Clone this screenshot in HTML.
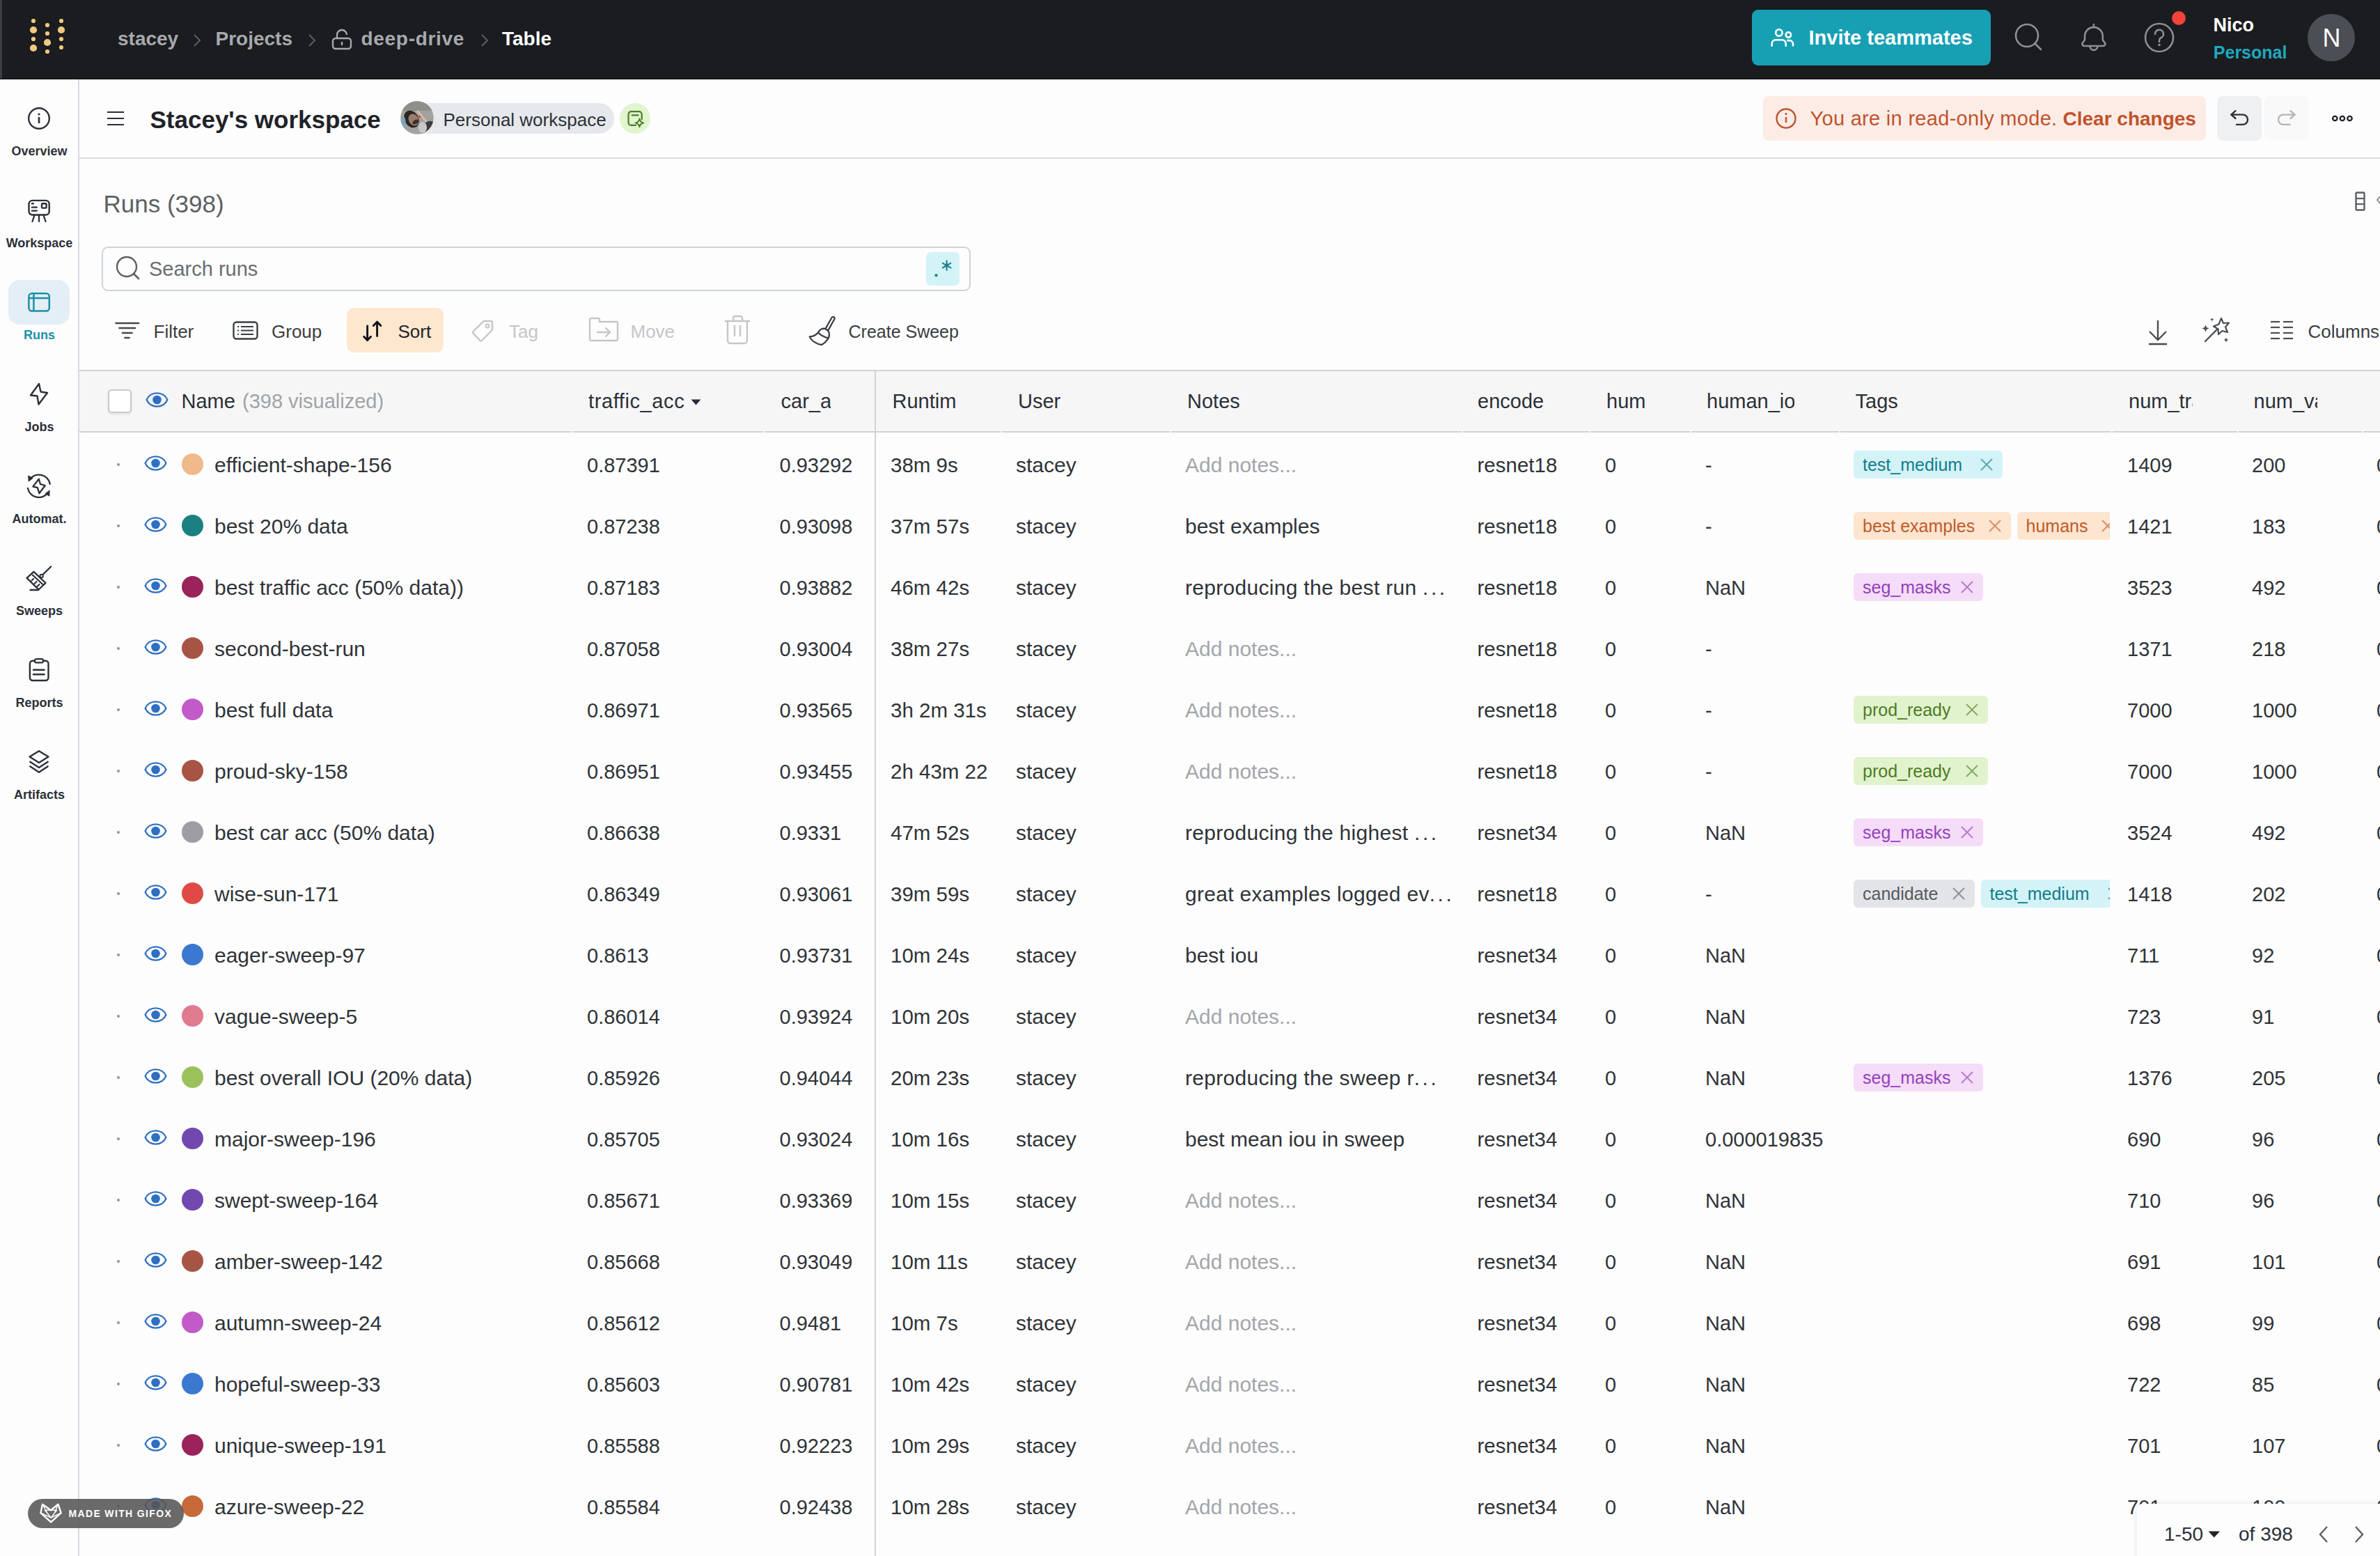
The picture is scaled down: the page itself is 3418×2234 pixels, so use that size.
<!DOCTYPE html>
<html><head><meta charset="utf-8"><title>Runs</title>
<style>
html,body{margin:0;padding:0;}
body{width:3418px;height:2234px;overflow:hidden;position:relative;background:#fdfdfd;font-family:"Liberation Sans",sans-serif;}
.a{position:absolute;white-space:nowrap;}
svg.a{overflow:visible;}
</style></head><body>

<div class="a" style="left:0px;top:0px;width:3418px;height:114px;background:#1a1c1f;"></div>
<div class="a" style="left:0px;top:113px;width:3418px;height:1px;background:#08090b;"></div>
<div class="a" style="left:0px;top:0px;width:3px;height:113px;background:#3a3d42;"></div>
<svg class="a" style="left:0px;top:0px;" width="120" height="113" viewBox="0 0 120 113" fill="none"><circle cx="48" cy="30" r="3.1" fill="#efc97f"/><circle cx="48" cy="43" r="5.1" fill="#efc97f"/><circle cx="48" cy="56" r="3.1" fill="#efc97f"/><circle cx="48" cy="69" r="5.1" fill="#efc97f"/><circle cx="68" cy="36" r="3.1" fill="#efc97f"/><circle cx="68" cy="48" r="3.1" fill="#efc97f"/><circle cx="68" cy="61" r="5.1" fill="#efc97f"/><circle cx="68" cy="74" r="3.1" fill="#efc97f"/><circle cx="88" cy="30" r="3.1" fill="#efc97f"/><circle cx="88" cy="43" r="5.1" fill="#efc97f"/><circle cx="88" cy="56" r="3.1" fill="#efc97f"/><circle cx="88" cy="68" r="3.1" fill="#efc97f"/></svg>
<div class="a" style="left:169px;top:42.30px;font-size:28px;line-height:28px;color:#a7a9ad;font-weight:700;">stacey</div>
<svg class="a" style="left:277px;top:48px;" width="12" height="20" viewBox="0 0 12 20" fill="none"><polyline points="2,2 10,10 2,18" stroke="#5c5f64" stroke-width="2" fill="none"/></svg>
<div class="a" style="left:309.5px;top:42.30px;font-size:28px;line-height:28px;color:#a7a9ad;font-weight:700;">Projects</div>
<svg class="a" style="left:442px;top:48px;" width="12" height="20" viewBox="0 0 12 20" fill="none"><polyline points="2,2 10,10 2,18" stroke="#5c5f64" stroke-width="2" fill="none"/></svg>
<svg class="a" style="left:476px;top:40px;" width="30" height="32" viewBox="0 0 30 32" fill="none"><rect x="2" y="15" width="26" height="15" rx="4" stroke="#a7a9ad" stroke-width="2.4"/><path d="M8 15 V10 a7 7 0 0 1 14 0" stroke="#a7a9ad" stroke-width="2.4"/><line x1="15" y1="20" x2="15" y2="25" stroke="#a7a9ad" stroke-width="2.4"/></svg>
<div class="a" style="left:518.5px;top:42.30px;font-size:28px;line-height:28px;color:#a7a9ad;font-weight:700;letter-spacing:0.7px;">deep-drive</div>
<svg class="a" style="left:690px;top:48px;" width="12" height="20" viewBox="0 0 12 20" fill="none"><polyline points="2,2 10,10 2,18" stroke="#5c5f64" stroke-width="2" fill="none"/></svg>
<div class="a" style="left:721px;top:42.30px;font-size:28px;line-height:28px;color:#ffffff;font-weight:700;">Table</div>
<div class="a" style="left:2516px;top:14px;width:343px;height:80px;background:#17a0b4;border-radius:9px;"></div>
<svg class="a" style="left:2541px;top:39px;" width="38" height="30" viewBox="0 0 38 30" fill="none"><circle cx="13.9" cy="8" r="4.7" stroke="#fff" stroke-width="2.6"/><path d="M3.6 26.7 V23.7 A5.5 5.5 0 0 1 9.1 18.2 H18.2 A5.5 5.5 0 0 1 23.7 23.7 V26.7" stroke="#fff" stroke-width="2.6" stroke-linecap="round"/><circle cx="27.4" cy="11.1" r="3.7" stroke="#fff" stroke-width="2.6"/><path d="M26.2 19.1 H29 A5 5 0 0 1 34 24.1 V26.4" stroke="#fff" stroke-width="2.6" stroke-linecap="round"/></svg>
<div class="a" style="left:2597.5px;top:40.15px;font-size:29px;line-height:29px;color:#ffffff;font-weight:700;">Invite teammates</div>
<svg class="a" style="left:2890px;top:32px;" width="44" height="44" viewBox="0 0 44 44" fill="none"><circle cx="21" cy="19" r="16" stroke="#8c8f94" stroke-width="2.6"/><line x1="32.5" y1="30.5" x2="41" y2="39" stroke="#8c8f94" stroke-width="2.6" stroke-linecap="round"/></svg>
<svg class="a" style="left:2986px;top:32px;" width="42" height="44" viewBox="0 0 42 44" fill="none"><path d="M8 25 V20 A12.9 12.9 0 0 1 33.8 20 V25 C33.8 27 37.4 28.5 37.4 31 A3 3 0 0 1 34.4 34 H7.3 A3 3 0 0 1 4.3 31 C4.3 28.5 8 27 8 25 Z" stroke="#8c8f94" stroke-width="2.6" stroke-linejoin="round"/><path d="M15.5 34.5 A5.4 5.4 0 0 0 26.3 34.5" stroke="#8c8f94" stroke-width="2.6"/><line x1="20.9" y1="3" x2="20.9" y2="6.5" stroke="#8c8f94" stroke-width="2.6" stroke-linecap="round"/></svg>
<svg class="a" style="left:3078px;top:31px;" width="46" height="46" viewBox="0 0 46 46" fill="none"><circle cx="23" cy="23" r="20" stroke="#8c8f94" stroke-width="2.6"/><path d="M17 18 a6 6 0 1 1 8 5.5 c-1.5 .8 -2 2 -2 3.5 v2" stroke="#8c8f94" stroke-width="2.6" stroke-linecap="round" fill="none"/><circle cx="23" cy="33.5" r="1.8" fill="#8c8f94"/></svg>
<div class="a" style="left:3119px;top:16px;width:20px;height:20px;background:#f0433a;border-radius:50%;"></div>
<div class="a" style="left:3178.4px;top:22.74px;font-size:27px;line-height:27px;color:#ffffff;font-weight:700;">Nico</div>
<div class="a" style="left:3178.8px;top:62.94px;font-size:25px;line-height:25px;color:#1fa8bf;font-weight:700;">Personal</div>
<div class="a" style="left:3314px;top:20px;width:68px;height:68px;background:#4b4e54;border-radius:50%;"></div>
<div class="a" style="left:3335.5px;top:36.83px;font-size:36px;line-height:36px;color:#ffffff;font-weight:400;">N</div>
<div class="a" style="left:112px;top:114px;width:2px;height:2120px;background:#d6dbe1;"></div>
<div class="a" style="left:12px;top:402px;width:88px;height:64px;background:#e4eef6;border-radius:16px;"></div>
<svg class="a" style="left:40px;top:153px;" width="34" height="34" viewBox="0 0 34 34" fill="none"><circle cx="16" cy="17" r="14.8" stroke="#2b3038" stroke-width="2.4"/><line x1="16" y1="15" x2="16" y2="24" stroke="#2b3038" stroke-width="2.6"/><circle cx="16" cy="11" r="1.6" fill="#2b3038"/></svg>
<div class="a" style="left:0;width:113px;text-align:center;top:207.56px;font-size:18px;line-height:18px;font-weight:700;color:#2b3038;">Overview</div>
<svg class="a" style="left:40px;top:285px;" width="34" height="34" viewBox="0 0 34 34" fill="none"><rect x="1.5" y="2.9" width="29.2" height="20.6" rx="5" stroke="#2b3038" stroke-width="2.4"/><line x1="6" y1="7.3" x2="7.8" y2="7.3" stroke="#2b3038" stroke-width="2.4" stroke-linecap="round"/><line x1="6" y1="12.6" x2="12.8" y2="12.6" stroke="#2b3038" stroke-width="2.4" stroke-linecap="round"/><line x1="6" y1="17.6" x2="12.8" y2="17.6" stroke="#2b3038" stroke-width="2.4" stroke-linecap="round"/><rect x="20" y="7.3" width="6.6" height="6.3" rx="1" stroke="#2b3038" stroke-width="2.4"/><path d="M9.5 24 L6.5 33 M16 24 V33 M22.5 24 L25.5 33" stroke="#2b3038" stroke-width="2.3" stroke-linecap="round"/></svg>
<div class="a" style="left:0;width:113px;text-align:center;top:339.56px;font-size:18px;line-height:18px;font-weight:700;color:#2b3038;">Workspace</div>
<svg class="a" style="left:40px;top:417px;" width="34" height="34" viewBox="0 0 34 34" fill="none"><rect x="1.4" y="4.2" width="29.4" height="25.4" rx="4.5" stroke="#1b8fa6" stroke-width="2.5"/><line x1="1.4" y1="11" x2="30.8" y2="11" stroke="#1b8fa6" stroke-width="2.5"/><line x1="8.4" y1="4.2" x2="8.4" y2="29.6" stroke="#1b8fa6" stroke-width="2.5"/></svg>
<div class="a" style="left:0;width:113px;text-align:center;top:471.56px;font-size:18px;line-height:18px;font-weight:700;color:#1b8fa6;">Runs</div>
<svg class="a" style="left:40px;top:549px;" width="34" height="34" viewBox="0 0 34 34" fill="none"><path d="M16 2 L4 18.5 L13.5 19.5 L15.5 31.5 L28 15 L18.5 13.5 Z" stroke="#2b3038" stroke-width="2.4" stroke-linejoin="round"/></svg>
<div class="a" style="left:0;width:113px;text-align:center;top:603.56px;font-size:18px;line-height:18px;font-weight:700;color:#2b3038;">Jobs</div>
<svg class="a" style="left:40px;top:681px;" width="34" height="34" viewBox="0 0 34 34" fill="none"><path d="M3.21 6.61 A16.2 16.2 0 0 1 31.70 13.71" stroke="#2b3038" stroke-width="2.4" stroke-linecap="round"/><path d="M-0.10 19.89 A16.2 16.2 0 0 0 28.74 26.55" stroke="#2b3038" stroke-width="2.4" stroke-linecap="round"/><path d="M0.8 2.2 L1.2 9.8 L6.8 5.6 Z" fill="#2b3038" stroke="#2b3038" stroke-width="1.2" stroke-linejoin="round"/><path d="M31 23.5 L30.8 31 L25.5 27.8 Z" fill="#2b3038" stroke="#2b3038" stroke-width="1.2" stroke-linejoin="round"/><path d="M15.8 6.8 L7.4 17.6 L13.9 19.2 L16.4 27.3 L24.7 16.2 L17.9 14 Z" stroke="#2b3038" stroke-width="2.3" stroke-linejoin="round"/></svg>
<div class="a" style="left:0;width:113px;text-align:center;top:735.56px;font-size:18px;line-height:18px;font-weight:700;color:#2b3038;">Automat.</div>
<svg class="a" style="left:40px;top:813px;" width="34" height="34" viewBox="0 0 34 34" fill="none"><path d="M33.2 0.5 L21.5 12" stroke="#2b3038" stroke-width="2.4" stroke-linecap="round"/><circle cx="19.6" cy="14" r="2.2" stroke="#2b3038" stroke-width="2"/><path d="M8.5 7.8 L25.5 24 L15.5 33.5 L-1.5 16.8 Z" stroke="#2b3038" stroke-width="2.4" stroke-linejoin="round"/><path d="M6.2 12 L22.8 27.3" stroke="#2b3038" stroke-width="2.2"/><path d="M5.5 20.5 L8 18 M9.5 25 L12.5 22 M13.5 29 L16.5 26" stroke="#2b3038" stroke-width="2.2" stroke-linecap="round"/><line x1="3.5" y1="34" x2="15" y2="34" stroke="#2b3038" stroke-width="2.4" stroke-linecap="round"/></svg>
<div class="a" style="left:0;width:113px;text-align:center;top:867.56px;font-size:18px;line-height:18px;font-weight:700;color:#2b3038;">Sweeps</div>
<svg class="a" style="left:40px;top:945px;" width="34" height="34" viewBox="0 0 34 34" fill="none"><rect x="2.9" y="3.8" width="26.6" height="28.2" rx="4" stroke="#2b3038" stroke-width="2.4"/><rect x="10" y="1.2" width="12" height="5.2" rx="2.2" stroke="#2b3038" stroke-width="2.2" fill="#fdfdfd"/><line x1="8" y1="16.7" x2="23.5" y2="16.7" stroke="#2b3038" stroke-width="2.4" stroke-linecap="round"/><line x1="8" y1="23.3" x2="23.5" y2="23.3" stroke="#2b3038" stroke-width="2.4" stroke-linecap="round"/></svg>
<div class="a" style="left:0;width:113px;text-align:center;top:999.56px;font-size:18px;line-height:18px;font-weight:700;color:#2b3038;">Reports</div>
<svg class="a" style="left:40px;top:1077px;" width="34" height="34" viewBox="0 0 34 34" fill="none"><path d="M16 1.2 L29.5 9.6 L16 18 L2.5 9.6 Z" stroke="#2b3038" stroke-width="2.4" stroke-linejoin="round"/><path d="M2.5 16.2 L16 25 L29.5 16.2" stroke="#2b3038" stroke-width="2.4" stroke-linejoin="round"/><path d="M2.5 22.8 L16 31.8 L29.5 22.8" stroke="#2b3038" stroke-width="2.4" stroke-linejoin="round"/></svg>
<div class="a" style="left:0;width:113px;text-align:center;top:1131.56px;font-size:18px;line-height:18px;font-weight:700;color:#2b3038;">Artifacts</div>
<div class="a" style="left:154px;top:160px;width:24px;height:2.4px;background:#2b3038;"></div>
<div class="a" style="left:154px;top:169px;width:24px;height:2.4px;background:#2b3038;"></div>
<div class="a" style="left:154px;top:178px;width:24px;height:2.4px;background:#2b3038;"></div>
<div class="a" style="left:215.5px;top:154.37px;font-size:35px;line-height:35px;color:#1f2329;font-weight:700;">Stacey&#x27;s workspace</div>
<div class="a" style="left:575px;top:148px;width:307px;height:44px;background:#e6e8eb;border-radius:22px;"></div>
<svg class="a" style="left:575px;top:145px;filter:blur(0.6px);" width="48" height="48" viewBox="0 0 48 48" fill="none"><defs><clipPath id="avc"><circle cx="24" cy="24" r="23.7"/></clipPath></defs><g clip-path="url(#avc)"><rect width="48" height="48" fill="#a3a29f"/><rect x="0" y="0" width="48" height="14" fill="#8f8e8a"/><ellipse cx="16" cy="26" rx="10" ry="13" fill="#2a2624" transform="rotate(-30 16 26)"/><ellipse cx="19" cy="27" rx="7" ry="9" fill="#9b7d6e" transform="rotate(-30 19 27)"/><ellipse cx="22" cy="30" rx="5" ry="3" fill="#3b2f2c" transform="rotate(-30 22 30)"/><ellipse cx="29" cy="22" rx="3" ry="2" fill="#c24a2a"/><path d="M24 14 L46 40" stroke="#d9b8a8" stroke-width="3"/><ellipse cx="40" cy="40" rx="9" ry="12" fill="#3c3d40" transform="rotate(30 40 40)"/><ellipse cx="32" cy="38" rx="6" ry="8" fill="#c9c8c6"/><ellipse cx="4" cy="34" rx="4" ry="12" fill="#7fa6b8"/></g></svg>
<div class="a" style="left:636.5px;top:158.79px;font-size:26px;line-height:26px;color:#2b3038;font-weight:400;">Personal workspace</div>
<div class="a" style="left:890px;top:148px;width:44px;height:44px;background:#e1f5cf;border-radius:50%;"></div>
<svg class="a" style="left:899px;top:157px;" width="28" height="28" viewBox="0 0 28 28" fill="none"><path d="M22.7 14.5 V7.2 a4 4 0 0 0 -4 -4 H7.5 a4 4 0 0 0 -4 4 V18.8 a4 4 0 0 0 4 4 H14" stroke="#4f7a2b" stroke-width="2.2" stroke-linecap="round"/><line x1="8.6" y1="8.3" x2="17.6" y2="8.3" stroke="#4f7a2b" stroke-width="2.2" stroke-linecap="round"/><path d="M19.4 13.6 Q20.3 18.5 25.2 19.4 Q20.3 20.3 19.4 25.2 Q18.5 20.3 13.6 19.4 Q18.5 18.5 19.4 13.6 Z" stroke="#4f7a2b" stroke-width="2" stroke-linejoin="round"/></svg>
<div class="a" style="left:2532px;top:138px;width:636px;height:64px;background:#fdece6;border-radius:8px;"></div>
<svg class="a" style="left:2549px;top:154px;" width="32" height="32" viewBox="0 0 32 32" fill="none"><circle cx="16" cy="16" r="13.5" stroke="#c0532b" stroke-width="2.4"/><line x1="16" y1="14" x2="16" y2="22" stroke="#c0532b" stroke-width="2.4"/><circle cx="16" cy="9.5" r="1.6" fill="#c0532b"/></svg>
<div class="a" style="left:2599.5px;top:155.85px;font-size:29px;line-height:29px;color:#c0532b;font-weight:400;letter-spacing:0.3px;">You are in read-only mode.</div>
<div class="a" style="left:2962.5px;top:156.70px;font-size:28px;line-height:28px;color:#c0532b;font-weight:700;">Clear changes</div>
<div class="a" style="left:3184px;top:138px;width:64px;height:64px;background:#eff0f1;border-radius:8px;"></div>
<div class="a" style="left:3252px;top:138px;width:64px;height:64px;background:#f9f9fa;border-radius:8px;"></div>
<svg class="a" style="left:3202px;top:157px;" width="30" height="26" viewBox="0 0 30 26" fill="none"><path d="M2.4 7.6 H18.85 A7.15 7.15 0 0 1 18.85 21.9 H10" stroke="#2b3038" stroke-width="2.4" fill="none" stroke-linecap="round"/><path d="M8.5 2.2 L2.4 7.6 L8.5 13" stroke="#2b3038" stroke-width="2.4" fill="none" stroke-linecap="round" stroke-linejoin="round"/></svg>
<svg class="a" style="left:3270px;top:157px;" width="30" height="26" viewBox="0 0 30 26" fill="none"><path d="M25.6 7.6 H9.15 A7.15 7.15 0 0 0 9.15 21.9 H18.6" stroke="#b3b5b9" stroke-width="2.4" fill="none" stroke-linecap="round"/><path d="M19.5 2.2 L25.6 7.6 L19.5 13" stroke="#b3b5b9" stroke-width="2.4" fill="none" stroke-linecap="round" stroke-linejoin="round"/></svg>
<svg class="a" style="left:3349px;top:164px;" width="32" height="12" viewBox="0 0 32 12" fill="none"><circle cx="4.3" cy="6" r="3.2" stroke="#1f2329" stroke-width="2.3"/><circle cx="14.9" cy="6" r="3.2" stroke="#1f2329" stroke-width="2.3"/><circle cx="25.5" cy="6" r="3.2" stroke="#1f2329" stroke-width="2.3"/></svg>
<div class="a" style="left:114px;top:226px;width:3304px;height:2px;background:#d9dde2;"></div>
<div class="a" style="left:148.5px;top:274.77px;font-size:35px;line-height:35px;color:#5d6064;font-weight:400;">Runs (398)</div>
<svg class="a" style="left:3382px;top:275px;" width="16" height="28" viewBox="0 0 16 28" fill="none"><rect x="1.5" y="1.5" width="12" height="25" rx="1" stroke="#5d6064" stroke-width="2.4"/><line x1="1.5" y1="10" x2="13.5" y2="10" stroke="#5d6064" stroke-width="2.2"/><line x1="1.5" y1="18" x2="13.5" y2="18" stroke="#5d6064" stroke-width="2.2"/></svg>
<svg class="a" style="left:3412px;top:280px;" width="8" height="14" viewBox="0 0 8 14" fill="none"><path d="M6 2 L2 7 L6 12" stroke="#8a8d91" stroke-width="2" fill="none"/></svg>
<div class="a" style="left:146px;top:354px;width:1248px;height:64px;box-sizing:border-box;border:2px solid #cfd3d9;border-radius:9px;background:#fdfdfd;"></div>
<svg class="a" style="left:166px;top:367px;" width="36" height="36" viewBox="0 0 36 36" fill="none"><circle cx="16" cy="16" r="14" stroke="#5d6064" stroke-width="2.4"/><line x1="26" y1="26" x2="33" y2="33" stroke="#5d6064" stroke-width="2.6" stroke-linecap="round"/></svg>
<div class="a" style="left:214px;top:372.45px;font-size:29px;line-height:29px;color:#6a6d72;font-weight:400;">Search runs</div>
<div class="a" style="left:1330px;top:362px;width:48px;height:48px;background:#d3f3f7;border-radius:7px;"></div>
<svg class="a" style="left:1330px;top:362px;" width="48" height="48" viewBox="0 0 48 48" fill="none"><circle cx="14.5" cy="33.3" r="2.1" fill="#167c88"/><line x1="29.60" y1="25.70" x2="29.60" y2="12.50" stroke="#167c88" stroke-width="2.1" stroke-linecap="round"/><line x1="23.88" y1="22.40" x2="35.32" y2="15.80" stroke="#167c88" stroke-width="2.1" stroke-linecap="round"/><line x1="23.88" y1="15.80" x2="35.32" y2="22.40" stroke="#167c88" stroke-width="2.1" stroke-linecap="round"/></svg>
<svg class="a" style="left:164px;top:461px;" width="38" height="28" viewBox="0 0 38 28" fill="none"><line x1="2.5" y1="3" x2="35" y2="3" stroke="#46494e" stroke-width="2.6" stroke-linecap="round"/><line x1="7.5" y1="10" x2="30" y2="10" stroke="#46494e" stroke-width="2.6" stroke-linecap="round"/><line x1="12" y1="17" x2="25.5" y2="17" stroke="#46494e" stroke-width="2.6" stroke-linecap="round"/><line x1="15.5" y1="24" x2="21.5" y2="24" stroke="#46494e" stroke-width="2.6" stroke-linecap="round"/></svg>
<div class="a" style="left:220.5px;top:463.29px;font-size:26px;line-height:26px;color:#3a3d42;font-weight:400;">Filter</div>
<svg class="a" style="left:334px;top:461px;" width="38" height="28" viewBox="0 0 38 28" fill="none"><rect x="1.5" y="1.5" width="34" height="24" rx="4" stroke="#3a3d42" stroke-width="2.4"/><line x1="7" y1="8" x2="9" y2="8" stroke="#3a3d42" stroke-width="2"/><line x1="12" y1="8" x2="30" y2="8" stroke="#3a3d42" stroke-width="2"/><line x1="7" y1="13.5" x2="9" y2="13.5" stroke="#3a3d42" stroke-width="2"/><line x1="12" y1="13.5" x2="30" y2="13.5" stroke="#3a3d42" stroke-width="2"/><line x1="7" y1="19" x2="9" y2="19" stroke="#3a3d42" stroke-width="2"/><line x1="12" y1="19" x2="30" y2="19" stroke="#3a3d42" stroke-width="2"/></svg>
<div class="a" style="left:390px;top:463.29px;font-size:26px;line-height:26px;color:#3a3d42;font-weight:400;">Group</div>
<div class="a" style="left:498px;top:442px;width:139px;height:64px;background:#fee7cf;border-radius:10px;"></div>
<svg class="a" style="left:519px;top:460px;" width="32" height="32" viewBox="0 0 32 32" fill="none"><path d="M8.6 8 V28 M3.6 23.2 L8.6 28.6 L13.6 23.2" stroke="#111315" stroke-width="2.9" fill="none" stroke-linecap="round" stroke-linejoin="round"/><path d="M22.6 22.5 V2.5 M17.4 7.6 L22.6 2 L27.8 7.6" stroke="#111315" stroke-width="2.9" fill="none" stroke-linecap="round" stroke-linejoin="round"/></svg>
<div class="a" style="left:571.5px;top:463.29px;font-size:26px;line-height:26px;color:#1f2329;font-weight:400;">Sort</div>
<svg class="a" style="left:676px;top:457px;" width="36" height="36" viewBox="0 0 36 36" fill="none"><path d="M4 18.5 L17.5 5 a3 3 0 0 1 2 -1 H29 a2 2 0 0 1 2 2 V15.5 a3 3 0 0 1 -1 2 L16.5 31.5 a2.5 2.5 0 0 1 -3.5 0 L4 22 a2.5 2.5 0 0 1 0 -3.5 Z" stroke="#c4c6c9" stroke-width="2.4" stroke-linejoin="round"/><circle cx="24" cy="11" r="2.5" stroke="#c4c6c9" stroke-width="2"/></svg>
<div class="a" style="left:731px;top:463.29px;font-size:26px;line-height:26px;color:#c4c6c9;font-weight:400;">Tag</div>
<svg class="a" style="left:845px;top:455px;" width="46" height="38" viewBox="0 0 46 38" fill="none"><path d="M4 2 H14 a2 2 0 0 1 2 2 V7 H40 a2 2 0 0 1 2 2 V32 a2 2 0 0 1 -2 2 H4 a2 2 0 0 1 -2 -2 V4 a2 2 0 0 1 2 -2 Z" stroke="#c4c6c9" stroke-width="2.4" stroke-linejoin="round"/><path d="M13 22 H31 M25 16 L31 22 L25 28" stroke="#c4c6c9" stroke-width="2.4" stroke-linecap="round" stroke-linejoin="round"/></svg>
<div class="a" style="left:905.5px;top:463.29px;font-size:26px;line-height:26px;color:#c4c6c9;font-weight:400;">Move</div>
<svg class="a" style="left:1039px;top:452px;" width="42" height="44" viewBox="0 0 42 44" fill="none"><path d="M2 9 H38 M14 9 V5 a3 3 0 0 1 3 -3 H24 a3 3 0 0 1 3 3 V9" stroke="#c4c6c9" stroke-width="2.4"/><path d="M6 9 V37 a4 4 0 0 0 4 4 H30 a4 4 0 0 0 4 -4 V9" stroke="#c4c6c9" stroke-width="2.4"/><line x1="16" y1="15" x2="16" y2="31" stroke="#c4c6c9" stroke-width="2.4"/><line x1="24" y1="15" x2="24" y2="31" stroke="#c4c6c9" stroke-width="2.4"/></svg>
<svg class="a" style="left:1160px;top:453px;" width="42" height="46" viewBox="0 0 42 46" fill="none"><path d="M25.6 18.9 L34.5 3.0 A2.2 2.2 0 0 1 38.3 5.2 L29.4 21.1" stroke="#3a3d42" stroke-width="2.2" stroke-linejoin="round"/><path d="M14.9 24.6 C17 20 22 17.5 26 19.5 C30.5 21.5 32.5 27 29.7 32.7" stroke="#3a3d42" stroke-width="2.3"/><path d="M14.9 24.6 C18 28 24 31 29.7 32.7" stroke="#3a3d42" stroke-width="2.3"/><path d="M14.9 24.6 C12 28 7 30.5 2.7 30.4 C5 36 12 41 20 42 C24 40 27.5 36 29.7 32.7" stroke="#3a3d42" stroke-width="2.3" stroke-linejoin="round"/></svg>
<div class="a" style="left:1218.5px;top:464.14px;font-size:25px;line-height:25px;color:#3a3d42;font-weight:400;">Create Sweep</div>
<svg class="a" style="left:3084px;top:458px;" width="32" height="40" viewBox="0 0 32 40" fill="none"><line x1="15" y1="2" x2="15" y2="28" stroke="#4a4d52" stroke-width="2.4"/><path d="M3 18 L15 30 L27 18" stroke="#4a4d52" stroke-width="2.4" fill="none"/><line x1="2" y1="36" x2="28" y2="36" stroke="#4a4d52" stroke-width="2.6"/></svg>
<svg class="a" style="left:3163px;top:454px;" width="42" height="40" viewBox="0 0 42 40" fill="none"><path d="M4 36 L22 18" stroke="#4a4d52" stroke-width="2.4" stroke-linecap="round"/><path d="M27 3 L30 10 L38 9.5 L33 15.5 L36 23 L28.5 21 L23 26 L22.5 18.5 L16 14.5 L23.5 11.5 Z" stroke="#4a4d52" stroke-width="2.2" stroke-linejoin="round"/><path d="M3 16 l1.5 -3.5 1.5 3.5 3.5 1.5 -3.5 1.5 -1.5 3.5 -1.5 -3.5 -3.5 -1.5 z" fill="#4a4d52"/><path d="M13 4 l0.8 -2 0.8 2 2 0.8 -2 0.8 -0.8 2 -0.8 -2 -2 -0.8 z" fill="#4a4d52"/><path d="M33 33 l1 -2.5 1 2.5 2.5 1 -2.5 1 -1 2.5 -1 -2.5 -2.5 -1 z" fill="#4a4d52"/></svg>
<svg class="a" style="left:3260px;top:460px;" width="34" height="30" viewBox="0 0 34 30" fill="none"><line x1="1" y1="2" x2="14" y2="2" stroke="#4a4d52" stroke-width="2.2"/><line x1="19" y1="2" x2="33" y2="2" stroke="#4a4d52" stroke-width="2.2"/><line x1="1" y1="10" x2="14" y2="10" stroke="#4a4d52" stroke-width="2.2"/><line x1="19" y1="10" x2="33" y2="10" stroke="#4a4d52" stroke-width="2.2"/><line x1="1" y1="18" x2="14" y2="18" stroke="#4a4d52" stroke-width="2.2"/><line x1="19" y1="18" x2="33" y2="18" stroke="#4a4d52" stroke-width="2.2"/><line x1="1" y1="26" x2="14" y2="26" stroke="#4a4d52" stroke-width="2.2"/><line x1="19" y1="26" x2="33" y2="26" stroke="#4a4d52" stroke-width="2.2"/></svg>
<div class="a" style="left:3314.5px;top:463.19px;font-size:26px;line-height:26px;color:#3a3d42;font-weight:400;">Columns</div>
<div class="a" style="left:114px;top:532px;width:3304px;height:88px;background:#f6f6f6;"></div>
<div class="a" style="left:114px;top:531px;width:3304px;height:2px;background:#d2d2d4;"></div>
<div class="a" style="left:114px;top:619px;width:3304px;height:2px;background:#d2d2d4;"></div>
<div class="a" style="left:821px;top:619px;width:2px;height:2px;background:#f6f6f6;"></div>
<div class="a" style="left:1096px;top:619px;width:2px;height:2px;background:#f6f6f6;"></div>
<div class="a" style="left:1437px;top:619px;width:2px;height:2px;background:#f6f6f6;"></div>
<div class="a" style="left:1680px;top:619px;width:2px;height:2px;background:#f6f6f6;"></div>
<div class="a" style="left:2099px;top:619px;width:2px;height:2px;background:#f6f6f6;"></div>
<div class="a" style="left:2282px;top:619px;width:2px;height:2px;background:#f6f6f6;"></div>
<div class="a" style="left:2427px;top:619px;width:2px;height:2px;background:#f6f6f6;"></div>
<div class="a" style="left:2641px;top:619px;width:2px;height:2px;background:#f6f6f6;"></div>
<div class="a" style="left:3032px;top:619px;width:2px;height:2px;background:#f6f6f6;"></div>
<div class="a" style="left:3213px;top:619px;width:2px;height:2px;background:#f6f6f6;"></div>
<div class="a" style="left:3392px;top:619px;width:2px;height:2px;background:#f6f6f6;"></div>
<div class="a" style="left:1256px;top:532px;width:2px;height:1702px;background:#d2d2d4;"></div>
<div class="a" style="left:155px;top:559px;width:34px;height:34px;box-sizing:border-box;border:2px solid #c8c9cc;border-radius:5px;background:#fff;box-shadow:0 2px 3px rgba(0,0,0,0.08);"></div>
<svg class="a" style="left:209px;top:563px;" width="33" height="22" viewBox="0 0 33 22" fill="none"><path d="M1.6 11 C7 -1.8 26 -1.8 31.4 11 C26 23.8 7 23.8 1.6 11 Z" stroke="#2e6fc2" stroke-width="2.3" fill="none" stroke-linejoin="round"/><circle cx="16.5" cy="11" r="6.3" fill="#2e6fc2"/></svg>
<div class="a" style="left:260.5px;top:562.45px;font-size:29px;line-height:29px;color:#2b3038;font-weight:400;">Name</div>
<div class="a" style="left:348px;top:562.45px;font-size:29px;line-height:29px;color:#a0a3a8;font-weight:400;">(398 visualized)</div>
<div class="a" style="left:845px;top:558.45px;width:187px;overflow:hidden;font-size:29px;line-height:37px;height:37px;color:#2b3038;letter-spacing:0.6px;">traffic_acc</div>
<div class="a" style="left:1121.5px;top:558.45px;width:71.5px;overflow:hidden;font-size:29px;line-height:37px;height:37px;color:#2b3038;">car_a</div>
<div class="a" style="left:1281.5px;top:558.45px;width:91.5px;overflow:hidden;font-size:29px;line-height:37px;height:37px;color:#2b3038;">Runtime</div>
<div class="a" style="left:1462px;top:558.45px;width:154px;overflow:hidden;font-size:29px;line-height:37px;height:37px;color:#2b3038;">User</div>
<div class="a" style="left:1705px;top:558.45px;width:330px;overflow:hidden;font-size:29px;line-height:37px;height:37px;color:#2b3038;">Notes</div>
<div class="a" style="left:2122px;top:558.45px;width:96px;overflow:hidden;font-size:29px;line-height:37px;height:37px;color:#2b3038;">encoder</div>
<div class="a" style="left:2307px;top:558.45px;width:56px;overflow:hidden;font-size:29px;line-height:37px;height:37px;color:#2b3038;">human_count</div>
<div class="a" style="left:2451px;top:558.45px;width:126px;overflow:hidden;font-size:29px;line-height:37px;height:37px;color:#2b3038;">human_iou</div>
<div class="a" style="left:2664.5px;top:558.45px;width:303.5px;overflow:hidden;font-size:29px;line-height:37px;height:37px;color:#2b3038;">Tags</div>
<div class="a" style="left:3057px;top:558.45px;width:92px;overflow:hidden;font-size:29px;line-height:37px;height:37px;color:#2b3038;">num_train</div>
<div class="a" style="left:3236.5px;top:558.45px;width:91.5px;overflow:hidden;font-size:29px;line-height:37px;height:37px;color:#2b3038;">num_val</div>
<svg class="a" style="left:992px;top:573px;" width="15" height="9" viewBox="0 0 15 9" fill="none"><path d="M0.5 0.5 H14.5 L7.5 8.5 Z" fill="#2b3038"/></svg>
<div class="a" style="left:168px;top:665px;width:4px;height:4px;background:#8f9296;border-radius:50%;"></div>
<svg class="a" style="left:207px;top:654px;" width="33" height="22" viewBox="0 0 33 22" fill="none"><path d="M1.6 11 C7 -1.8 26 -1.8 31.4 11 C26 23.8 7 23.8 1.6 11 Z" stroke="#2e6fc2" stroke-width="2.3" fill="none" stroke-linejoin="round"/><circle cx="16.5" cy="11" r="6.3" fill="#2e6fc2"/></svg>
<div class="a" style="left:261px;top:651.2px;width:31px;height:31px;background:#f0b98a;border-radius:50%;"></div>
<div class="a" style="left:308px;top:652.81px;font-size:30px;line-height:30px;color:#2f3338;font-weight:400;">efficient-shape-156</div>
<div class="a" style="left:843px;top:653.65px;font-size:29px;line-height:29px;color:#2f3338;font-weight:400;">0.87391</div>
<div class="a" style="left:1119.5px;top:653.65px;font-size:29px;line-height:29px;color:#2f3338;font-weight:400;">0.93292</div>
<div class="a" style="left:1279px;top:653.23px;font-size:29.5px;line-height:29.5px;color:#2f3338;font-weight:400;">38m 9s</div>
<div class="a" style="left:1459px;top:652.81px;font-size:30px;line-height:30px;color:#2f3338;font-weight:400;">stacey</div>
<div class="a" style="left:1702px;top:652.81px;font-size:30px;line-height:30px;color:#a2a5aa;font-weight:400;">Add notes...</div>
<div class="a" style="left:2121.5px;top:653.23px;font-size:29.5px;line-height:29.5px;color:#2f3338;font-weight:400;">resnet18</div>
<div class="a" style="left:2305px;top:653.65px;font-size:29px;line-height:29px;color:#2f3338;font-weight:400;">0</div>
<div class="a" style="left:2449px;top:653.65px;font-size:29px;line-height:29px;color:#2f3338;font-weight:400;">-</div>
<div class="a" style="left:2662px;top:647.2px;height:40px;width:214px;overflow:hidden;"><div style="position:relative;width:214px;height:40px;background:#d3f3f7;border-radius:6px;"><div class="a" style="left:13px;top:0;font-size:25px;line-height:40px;color:#137c8c;">test_medium</div><svg class="a" style="right:13px;top:10px;" width="20" height="20" viewBox="0 0 20 20"><path d="M2 2 L18 18 M18 2 L2 18" stroke="#5aaab6" stroke-width="2"/></svg></div></div>
<div class="a" style="left:3055px;top:653.65px;font-size:29px;line-height:29px;color:#2f3338;font-weight:400;">1409</div>
<div class="a" style="left:3234px;top:653.65px;font-size:29px;line-height:29px;color:#2f3338;font-weight:400;">200</div>
<div class="a" style="left:3413px;top:653.65px;font-size:29px;line-height:29px;color:#2f3338;font-weight:400;">0</div>
<div class="a" style="left:168px;top:753px;width:4px;height:4px;background:#8f9296;border-radius:50%;"></div>
<svg class="a" style="left:207px;top:742px;" width="33" height="22" viewBox="0 0 33 22" fill="none"><path d="M1.6 11 C7 -1.8 26 -1.8 31.4 11 C26 23.8 7 23.8 1.6 11 Z" stroke="#2e6fc2" stroke-width="2.3" fill="none" stroke-linejoin="round"/><circle cx="16.5" cy="11" r="6.3" fill="#2e6fc2"/></svg>
<div class="a" style="left:261px;top:739.2px;width:31px;height:31px;background:#1a8080;border-radius:50%;"></div>
<div class="a" style="left:308px;top:740.81px;font-size:30px;line-height:30px;color:#2f3338;font-weight:400;">best 20% data</div>
<div class="a" style="left:843px;top:741.65px;font-size:29px;line-height:29px;color:#2f3338;font-weight:400;">0.87238</div>
<div class="a" style="left:1119.5px;top:741.65px;font-size:29px;line-height:29px;color:#2f3338;font-weight:400;">0.93098</div>
<div class="a" style="left:1279px;top:741.23px;font-size:29.5px;line-height:29.5px;color:#2f3338;font-weight:400;">37m 57s</div>
<div class="a" style="left:1459px;top:740.81px;font-size:30px;line-height:30px;color:#2f3338;font-weight:400;">stacey</div>
<div class="a" style="left:1702px;top:740.81px;font-size:30px;line-height:30px;color:#2f3338;font-weight:400;">best examples</div>
<div class="a" style="left:2121.5px;top:741.23px;font-size:29.5px;line-height:29.5px;color:#2f3338;font-weight:400;">resnet18</div>
<div class="a" style="left:2305px;top:741.65px;font-size:29px;line-height:29px;color:#2f3338;font-weight:400;">0</div>
<div class="a" style="left:2449px;top:741.65px;font-size:29px;line-height:29px;color:#2f3338;font-weight:400;">-</div>
<div class="a" style="left:2662px;top:735.2px;height:40px;width:226px;overflow:hidden;"><div style="position:relative;width:226px;height:40px;background:#fde5cf;border-radius:6px;"><div class="a" style="left:13px;top:0;font-size:25px;line-height:40px;color:#bf5a2a;">best examples</div><svg class="a" style="right:13px;top:10px;" width="20" height="20" viewBox="0 0 20 20"><path d="M2 2 L18 18 M18 2 L2 18" stroke="#d98f68" stroke-width="2"/></svg></div></div>
<div class="a" style="left:2896.5px;top:735.2px;height:40px;width:133.5px;overflow:hidden;"><div style="position:relative;width:153px;height:40px;background:#fde5cf;border-radius:6px;"><div class="a" style="left:13px;top:0;font-size:25px;line-height:40px;color:#bf5a2a;">humans</div><svg class="a" style="right:13px;top:10px;" width="20" height="20" viewBox="0 0 20 20"><path d="M2 2 L18 18 M18 2 L2 18" stroke="#d98f68" stroke-width="2"/></svg></div></div>
<div class="a" style="left:3055px;top:741.65px;font-size:29px;line-height:29px;color:#2f3338;font-weight:400;">1421</div>
<div class="a" style="left:3234px;top:741.65px;font-size:29px;line-height:29px;color:#2f3338;font-weight:400;">183</div>
<div class="a" style="left:3413px;top:741.65px;font-size:29px;line-height:29px;color:#2f3338;font-weight:400;">0</div>
<div class="a" style="left:168px;top:841px;width:4px;height:4px;background:#8f9296;border-radius:50%;"></div>
<svg class="a" style="left:207px;top:830px;" width="33" height="22" viewBox="0 0 33 22" fill="none"><path d="M1.6 11 C7 -1.8 26 -1.8 31.4 11 C26 23.8 7 23.8 1.6 11 Z" stroke="#2e6fc2" stroke-width="2.3" fill="none" stroke-linejoin="round"/><circle cx="16.5" cy="11" r="6.3" fill="#2e6fc2"/></svg>
<div class="a" style="left:261px;top:827.2px;width:31px;height:31px;background:#9a2359;border-radius:50%;"></div>
<div class="a" style="left:308px;top:828.81px;font-size:30px;line-height:30px;color:#2f3338;font-weight:400;">best traffic acc (50% data))</div>
<div class="a" style="left:843px;top:829.65px;font-size:29px;line-height:29px;color:#2f3338;font-weight:400;">0.87183</div>
<div class="a" style="left:1119.5px;top:829.65px;font-size:29px;line-height:29px;color:#2f3338;font-weight:400;">0.93882</div>
<div class="a" style="left:1279px;top:829.23px;font-size:29.5px;line-height:29.5px;color:#2f3338;font-weight:400;">46m 42s</div>
<div class="a" style="left:1459px;top:828.81px;font-size:30px;line-height:30px;color:#2f3338;font-weight:400;">stacey</div>
<div class="a" style="left:1702px;top:828.81px;font-size:30px;line-height:30px;color:#2f3338;font-weight:400;letter-spacing:0.3px;">reproducing the best run <span style="letter-spacing:3.5px;">...</span></div>
<div class="a" style="left:2121.5px;top:829.23px;font-size:29.5px;line-height:29.5px;color:#2f3338;font-weight:400;">resnet18</div>
<div class="a" style="left:2305px;top:829.65px;font-size:29px;line-height:29px;color:#2f3338;font-weight:400;">0</div>
<div class="a" style="left:2449px;top:829.65px;font-size:29px;line-height:29px;color:#2f3338;font-weight:400;">NaN</div>
<div class="a" style="left:2662px;top:823.2px;height:40px;width:186px;overflow:hidden;"><div style="position:relative;width:186px;height:40px;background:#f5dcf8;border-radius:6px;"><div class="a" style="left:13px;top:0;font-size:25px;line-height:40px;color:#9440bd;">seg_masks</div><svg class="a" style="right:13px;top:10px;" width="20" height="20" viewBox="0 0 20 20"><path d="M2 2 L18 18 M18 2 L2 18" stroke="#b67ccf" stroke-width="2"/></svg></div></div>
<div class="a" style="left:3055px;top:829.65px;font-size:29px;line-height:29px;color:#2f3338;font-weight:400;">3523</div>
<div class="a" style="left:3234px;top:829.65px;font-size:29px;line-height:29px;color:#2f3338;font-weight:400;">492</div>
<div class="a" style="left:3413px;top:829.65px;font-size:29px;line-height:29px;color:#2f3338;font-weight:400;">0</div>
<div class="a" style="left:168px;top:929px;width:4px;height:4px;background:#8f9296;border-radius:50%;"></div>
<svg class="a" style="left:207px;top:918px;" width="33" height="22" viewBox="0 0 33 22" fill="none"><path d="M1.6 11 C7 -1.8 26 -1.8 31.4 11 C26 23.8 7 23.8 1.6 11 Z" stroke="#2e6fc2" stroke-width="2.3" fill="none" stroke-linejoin="round"/><circle cx="16.5" cy="11" r="6.3" fill="#2e6fc2"/></svg>
<div class="a" style="left:261px;top:915.2px;width:31px;height:31px;background:#a65544;border-radius:50%;"></div>
<div class="a" style="left:308px;top:916.81px;font-size:30px;line-height:30px;color:#2f3338;font-weight:400;">second-best-run</div>
<div class="a" style="left:843px;top:917.65px;font-size:29px;line-height:29px;color:#2f3338;font-weight:400;">0.87058</div>
<div class="a" style="left:1119.5px;top:917.65px;font-size:29px;line-height:29px;color:#2f3338;font-weight:400;">0.93004</div>
<div class="a" style="left:1279px;top:917.23px;font-size:29.5px;line-height:29.5px;color:#2f3338;font-weight:400;">38m 27s</div>
<div class="a" style="left:1459px;top:916.81px;font-size:30px;line-height:30px;color:#2f3338;font-weight:400;">stacey</div>
<div class="a" style="left:1702px;top:916.81px;font-size:30px;line-height:30px;color:#a2a5aa;font-weight:400;">Add notes...</div>
<div class="a" style="left:2121.5px;top:917.23px;font-size:29.5px;line-height:29.5px;color:#2f3338;font-weight:400;">resnet18</div>
<div class="a" style="left:2305px;top:917.65px;font-size:29px;line-height:29px;color:#2f3338;font-weight:400;">0</div>
<div class="a" style="left:2449px;top:917.65px;font-size:29px;line-height:29px;color:#2f3338;font-weight:400;">-</div>
<div class="a" style="left:3055px;top:917.65px;font-size:29px;line-height:29px;color:#2f3338;font-weight:400;">1371</div>
<div class="a" style="left:3234px;top:917.65px;font-size:29px;line-height:29px;color:#2f3338;font-weight:400;">218</div>
<div class="a" style="left:3413px;top:917.65px;font-size:29px;line-height:29px;color:#2f3338;font-weight:400;">0</div>
<div class="a" style="left:168px;top:1017px;width:4px;height:4px;background:#8f9296;border-radius:50%;"></div>
<svg class="a" style="left:207px;top:1006px;" width="33" height="22" viewBox="0 0 33 22" fill="none"><path d="M1.6 11 C7 -1.8 26 -1.8 31.4 11 C26 23.8 7 23.8 1.6 11 Z" stroke="#2e6fc2" stroke-width="2.3" fill="none" stroke-linejoin="round"/><circle cx="16.5" cy="11" r="6.3" fill="#2e6fc2"/></svg>
<div class="a" style="left:261px;top:1003.2px;width:31px;height:31px;background:#c15bc8;border-radius:50%;"></div>
<div class="a" style="left:308px;top:1004.81px;font-size:30px;line-height:30px;color:#2f3338;font-weight:400;">best full data</div>
<div class="a" style="left:843px;top:1005.65px;font-size:29px;line-height:29px;color:#2f3338;font-weight:400;">0.86971</div>
<div class="a" style="left:1119.5px;top:1005.65px;font-size:29px;line-height:29px;color:#2f3338;font-weight:400;">0.93565</div>
<div class="a" style="left:1279px;top:1005.23px;font-size:29.5px;line-height:29.5px;color:#2f3338;font-weight:400;">3h 2m 31s</div>
<div class="a" style="left:1459px;top:1004.81px;font-size:30px;line-height:30px;color:#2f3338;font-weight:400;">stacey</div>
<div class="a" style="left:1702px;top:1004.81px;font-size:30px;line-height:30px;color:#a2a5aa;font-weight:400;">Add notes...</div>
<div class="a" style="left:2121.5px;top:1005.23px;font-size:29.5px;line-height:29.5px;color:#2f3338;font-weight:400;">resnet18</div>
<div class="a" style="left:2305px;top:1005.65px;font-size:29px;line-height:29px;color:#2f3338;font-weight:400;">0</div>
<div class="a" style="left:2449px;top:1005.65px;font-size:29px;line-height:29px;color:#2f3338;font-weight:400;">-</div>
<div class="a" style="left:2662px;top:999.2px;height:40px;width:193px;overflow:hidden;"><div style="position:relative;width:193px;height:40px;background:#e1f3cc;border-radius:6px;"><div class="a" style="left:13px;top:0;font-size:25px;line-height:40px;color:#4e7b27;">prod_ready</div><svg class="a" style="right:13px;top:10px;" width="20" height="20" viewBox="0 0 20 20"><path d="M2 2 L18 18 M18 2 L2 18" stroke="#86a864" stroke-width="2"/></svg></div></div>
<div class="a" style="left:3055px;top:1005.65px;font-size:29px;line-height:29px;color:#2f3338;font-weight:400;">7000</div>
<div class="a" style="left:3234px;top:1005.65px;font-size:29px;line-height:29px;color:#2f3338;font-weight:400;">1000</div>
<div class="a" style="left:3413px;top:1005.65px;font-size:29px;line-height:29px;color:#2f3338;font-weight:400;">0</div>
<div class="a" style="left:168px;top:1105px;width:4px;height:4px;background:#8f9296;border-radius:50%;"></div>
<svg class="a" style="left:207px;top:1094px;" width="33" height="22" viewBox="0 0 33 22" fill="none"><path d="M1.6 11 C7 -1.8 26 -1.8 31.4 11 C26 23.8 7 23.8 1.6 11 Z" stroke="#2e6fc2" stroke-width="2.3" fill="none" stroke-linejoin="round"/><circle cx="16.5" cy="11" r="6.3" fill="#2e6fc2"/></svg>
<div class="a" style="left:261px;top:1091.2px;width:31px;height:31px;background:#a65544;border-radius:50%;"></div>
<div class="a" style="left:308px;top:1092.81px;font-size:30px;line-height:30px;color:#2f3338;font-weight:400;">proud-sky-158</div>
<div class="a" style="left:843px;top:1093.65px;font-size:29px;line-height:29px;color:#2f3338;font-weight:400;">0.86951</div>
<div class="a" style="left:1119.5px;top:1093.65px;font-size:29px;line-height:29px;color:#2f3338;font-weight:400;">0.93455</div>
<div class="a" style="left:1279px;top:1093.23px;font-size:29.5px;line-height:29.5px;color:#2f3338;font-weight:400;">2h 43m 22</div>
<div class="a" style="left:1459px;top:1092.81px;font-size:30px;line-height:30px;color:#2f3338;font-weight:400;">stacey</div>
<div class="a" style="left:1702px;top:1092.81px;font-size:30px;line-height:30px;color:#a2a5aa;font-weight:400;">Add notes...</div>
<div class="a" style="left:2121.5px;top:1093.23px;font-size:29.5px;line-height:29.5px;color:#2f3338;font-weight:400;">resnet18</div>
<div class="a" style="left:2305px;top:1093.65px;font-size:29px;line-height:29px;color:#2f3338;font-weight:400;">0</div>
<div class="a" style="left:2449px;top:1093.65px;font-size:29px;line-height:29px;color:#2f3338;font-weight:400;">-</div>
<div class="a" style="left:2662px;top:1087.2px;height:40px;width:193px;overflow:hidden;"><div style="position:relative;width:193px;height:40px;background:#e1f3cc;border-radius:6px;"><div class="a" style="left:13px;top:0;font-size:25px;line-height:40px;color:#4e7b27;">prod_ready</div><svg class="a" style="right:13px;top:10px;" width="20" height="20" viewBox="0 0 20 20"><path d="M2 2 L18 18 M18 2 L2 18" stroke="#86a864" stroke-width="2"/></svg></div></div>
<div class="a" style="left:3055px;top:1093.65px;font-size:29px;line-height:29px;color:#2f3338;font-weight:400;">7000</div>
<div class="a" style="left:3234px;top:1093.65px;font-size:29px;line-height:29px;color:#2f3338;font-weight:400;">1000</div>
<div class="a" style="left:3413px;top:1093.65px;font-size:29px;line-height:29px;color:#2f3338;font-weight:400;">0</div>
<div class="a" style="left:168px;top:1193px;width:4px;height:4px;background:#8f9296;border-radius:50%;"></div>
<svg class="a" style="left:207px;top:1182px;" width="33" height="22" viewBox="0 0 33 22" fill="none"><path d="M1.6 11 C7 -1.8 26 -1.8 31.4 11 C26 23.8 7 23.8 1.6 11 Z" stroke="#2e6fc2" stroke-width="2.3" fill="none" stroke-linejoin="round"/><circle cx="16.5" cy="11" r="6.3" fill="#2e6fc2"/></svg>
<div class="a" style="left:261px;top:1179.2px;width:31px;height:31px;background:#9d9ea3;border-radius:50%;"></div>
<div class="a" style="left:308px;top:1180.81px;font-size:30px;line-height:30px;color:#2f3338;font-weight:400;">best car acc (50% data)</div>
<div class="a" style="left:843px;top:1181.65px;font-size:29px;line-height:29px;color:#2f3338;font-weight:400;">0.86638</div>
<div class="a" style="left:1119.5px;top:1181.65px;font-size:29px;line-height:29px;color:#2f3338;font-weight:400;">0.9331</div>
<div class="a" style="left:1279px;top:1181.23px;font-size:29.5px;line-height:29.5px;color:#2f3338;font-weight:400;">47m 52s</div>
<div class="a" style="left:1459px;top:1180.81px;font-size:30px;line-height:30px;color:#2f3338;font-weight:400;">stacey</div>
<div class="a" style="left:1702px;top:1180.81px;font-size:30px;line-height:30px;color:#2f3338;font-weight:400;letter-spacing:0.3px;">reproducing the highest <span style="letter-spacing:3.5px;">...</span></div>
<div class="a" style="left:2121.5px;top:1181.23px;font-size:29.5px;line-height:29.5px;color:#2f3338;font-weight:400;">resnet34</div>
<div class="a" style="left:2305px;top:1181.65px;font-size:29px;line-height:29px;color:#2f3338;font-weight:400;">0</div>
<div class="a" style="left:2449px;top:1181.65px;font-size:29px;line-height:29px;color:#2f3338;font-weight:400;">NaN</div>
<div class="a" style="left:2662px;top:1175.2px;height:40px;width:186px;overflow:hidden;"><div style="position:relative;width:186px;height:40px;background:#f5dcf8;border-radius:6px;"><div class="a" style="left:13px;top:0;font-size:25px;line-height:40px;color:#9440bd;">seg_masks</div><svg class="a" style="right:13px;top:10px;" width="20" height="20" viewBox="0 0 20 20"><path d="M2 2 L18 18 M18 2 L2 18" stroke="#b67ccf" stroke-width="2"/></svg></div></div>
<div class="a" style="left:3055px;top:1181.65px;font-size:29px;line-height:29px;color:#2f3338;font-weight:400;">3524</div>
<div class="a" style="left:3234px;top:1181.65px;font-size:29px;line-height:29px;color:#2f3338;font-weight:400;">492</div>
<div class="a" style="left:3413px;top:1181.65px;font-size:29px;line-height:29px;color:#2f3338;font-weight:400;">0</div>
<div class="a" style="left:168px;top:1281px;width:4px;height:4px;background:#8f9296;border-radius:50%;"></div>
<svg class="a" style="left:207px;top:1270px;" width="33" height="22" viewBox="0 0 33 22" fill="none"><path d="M1.6 11 C7 -1.8 26 -1.8 31.4 11 C26 23.8 7 23.8 1.6 11 Z" stroke="#2e6fc2" stroke-width="2.3" fill="none" stroke-linejoin="round"/><circle cx="16.5" cy="11" r="6.3" fill="#2e6fc2"/></svg>
<div class="a" style="left:261px;top:1267.2px;width:31px;height:31px;background:#df4a45;border-radius:50%;"></div>
<div class="a" style="left:308px;top:1268.81px;font-size:30px;line-height:30px;color:#2f3338;font-weight:400;">wise-sun-171</div>
<div class="a" style="left:843px;top:1269.65px;font-size:29px;line-height:29px;color:#2f3338;font-weight:400;">0.86349</div>
<div class="a" style="left:1119.5px;top:1269.65px;font-size:29px;line-height:29px;color:#2f3338;font-weight:400;">0.93061</div>
<div class="a" style="left:1279px;top:1269.23px;font-size:29.5px;line-height:29.5px;color:#2f3338;font-weight:400;">39m 59s</div>
<div class="a" style="left:1459px;top:1268.81px;font-size:30px;line-height:30px;color:#2f3338;font-weight:400;">stacey</div>
<div class="a" style="left:1702px;top:1268.81px;font-size:30px;line-height:30px;color:#2f3338;font-weight:400;letter-spacing:0.3px;">great examples logged ev<span style="letter-spacing:3.5px;">...</span></div>
<div class="a" style="left:2121.5px;top:1269.23px;font-size:29.5px;line-height:29.5px;color:#2f3338;font-weight:400;">resnet18</div>
<div class="a" style="left:2305px;top:1269.65px;font-size:29px;line-height:29px;color:#2f3338;font-weight:400;">0</div>
<div class="a" style="left:2449px;top:1269.65px;font-size:29px;line-height:29px;color:#2f3338;font-weight:400;">-</div>
<div class="a" style="left:2662px;top:1263.2px;height:40px;width:174px;overflow:hidden;"><div style="position:relative;width:174px;height:40px;background:#e3e4e7;border-radius:6px;"><div class="a" style="left:13px;top:0;font-size:25px;line-height:40px;color:#55595f;">candidate</div><svg class="a" style="right:13px;top:10px;" width="20" height="20" viewBox="0 0 20 20"><path d="M2 2 L18 18 M18 2 L2 18" stroke="#8d9095" stroke-width="2"/></svg></div></div>
<div class="a" style="left:2844.5px;top:1263.2px;height:40px;width:185.5px;overflow:hidden;"><div style="position:relative;width:214px;height:40px;background:#d3f3f7;border-radius:6px;"><div class="a" style="left:13px;top:0;font-size:25px;line-height:40px;color:#137c8c;">test_medium</div><svg class="a" style="right:13px;top:10px;" width="20" height="20" viewBox="0 0 20 20"><path d="M2 2 L18 18 M18 2 L2 18" stroke="#5aaab6" stroke-width="2"/></svg></div></div>
<div class="a" style="left:3055px;top:1269.65px;font-size:29px;line-height:29px;color:#2f3338;font-weight:400;">1418</div>
<div class="a" style="left:3234px;top:1269.65px;font-size:29px;line-height:29px;color:#2f3338;font-weight:400;">202</div>
<div class="a" style="left:3413px;top:1269.65px;font-size:29px;line-height:29px;color:#2f3338;font-weight:400;">0</div>
<div class="a" style="left:168px;top:1369px;width:4px;height:4px;background:#8f9296;border-radius:50%;"></div>
<svg class="a" style="left:207px;top:1358px;" width="33" height="22" viewBox="0 0 33 22" fill="none"><path d="M1.6 11 C7 -1.8 26 -1.8 31.4 11 C26 23.8 7 23.8 1.6 11 Z" stroke="#2e6fc2" stroke-width="2.3" fill="none" stroke-linejoin="round"/><circle cx="16.5" cy="11" r="6.3" fill="#2e6fc2"/></svg>
<div class="a" style="left:261px;top:1355.2px;width:31px;height:31px;background:#3b78d0;border-radius:50%;"></div>
<div class="a" style="left:308px;top:1356.81px;font-size:30px;line-height:30px;color:#2f3338;font-weight:400;">eager-sweep-97</div>
<div class="a" style="left:843px;top:1357.65px;font-size:29px;line-height:29px;color:#2f3338;font-weight:400;">0.8613</div>
<div class="a" style="left:1119.5px;top:1357.65px;font-size:29px;line-height:29px;color:#2f3338;font-weight:400;">0.93731</div>
<div class="a" style="left:1279px;top:1357.23px;font-size:29.5px;line-height:29.5px;color:#2f3338;font-weight:400;">10m 24s</div>
<div class="a" style="left:1459px;top:1356.81px;font-size:30px;line-height:30px;color:#2f3338;font-weight:400;">stacey</div>
<div class="a" style="left:1702px;top:1356.81px;font-size:30px;line-height:30px;color:#2f3338;font-weight:400;">best iou</div>
<div class="a" style="left:2121.5px;top:1357.23px;font-size:29.5px;line-height:29.5px;color:#2f3338;font-weight:400;">resnet34</div>
<div class="a" style="left:2305px;top:1357.65px;font-size:29px;line-height:29px;color:#2f3338;font-weight:400;">0</div>
<div class="a" style="left:2449px;top:1357.65px;font-size:29px;line-height:29px;color:#2f3338;font-weight:400;">NaN</div>
<div class="a" style="left:3055px;top:1357.65px;font-size:29px;line-height:29px;color:#2f3338;font-weight:400;">711</div>
<div class="a" style="left:3234px;top:1357.65px;font-size:29px;line-height:29px;color:#2f3338;font-weight:400;">92</div>
<div class="a" style="left:3413px;top:1357.65px;font-size:29px;line-height:29px;color:#2f3338;font-weight:400;">0</div>
<div class="a" style="left:168px;top:1457px;width:4px;height:4px;background:#8f9296;border-radius:50%;"></div>
<svg class="a" style="left:207px;top:1446px;" width="33" height="22" viewBox="0 0 33 22" fill="none"><path d="M1.6 11 C7 -1.8 26 -1.8 31.4 11 C26 23.8 7 23.8 1.6 11 Z" stroke="#2e6fc2" stroke-width="2.3" fill="none" stroke-linejoin="round"/><circle cx="16.5" cy="11" r="6.3" fill="#2e6fc2"/></svg>
<div class="a" style="left:261px;top:1443.2px;width:31px;height:31px;background:#e07a8e;border-radius:50%;"></div>
<div class="a" style="left:308px;top:1444.81px;font-size:30px;line-height:30px;color:#2f3338;font-weight:400;">vague-sweep-5</div>
<div class="a" style="left:843px;top:1445.65px;font-size:29px;line-height:29px;color:#2f3338;font-weight:400;">0.86014</div>
<div class="a" style="left:1119.5px;top:1445.65px;font-size:29px;line-height:29px;color:#2f3338;font-weight:400;">0.93924</div>
<div class="a" style="left:1279px;top:1445.23px;font-size:29.5px;line-height:29.5px;color:#2f3338;font-weight:400;">10m 20s</div>
<div class="a" style="left:1459px;top:1444.81px;font-size:30px;line-height:30px;color:#2f3338;font-weight:400;">stacey</div>
<div class="a" style="left:1702px;top:1444.81px;font-size:30px;line-height:30px;color:#a2a5aa;font-weight:400;">Add notes...</div>
<div class="a" style="left:2121.5px;top:1445.23px;font-size:29.5px;line-height:29.5px;color:#2f3338;font-weight:400;">resnet34</div>
<div class="a" style="left:2305px;top:1445.65px;font-size:29px;line-height:29px;color:#2f3338;font-weight:400;">0</div>
<div class="a" style="left:2449px;top:1445.65px;font-size:29px;line-height:29px;color:#2f3338;font-weight:400;">NaN</div>
<div class="a" style="left:3055px;top:1445.65px;font-size:29px;line-height:29px;color:#2f3338;font-weight:400;">723</div>
<div class="a" style="left:3234px;top:1445.65px;font-size:29px;line-height:29px;color:#2f3338;font-weight:400;">91</div>
<div class="a" style="left:3413px;top:1445.65px;font-size:29px;line-height:29px;color:#2f3338;font-weight:400;">0</div>
<div class="a" style="left:168px;top:1545px;width:4px;height:4px;background:#8f9296;border-radius:50%;"></div>
<svg class="a" style="left:207px;top:1534px;" width="33" height="22" viewBox="0 0 33 22" fill="none"><path d="M1.6 11 C7 -1.8 26 -1.8 31.4 11 C26 23.8 7 23.8 1.6 11 Z" stroke="#2e6fc2" stroke-width="2.3" fill="none" stroke-linejoin="round"/><circle cx="16.5" cy="11" r="6.3" fill="#2e6fc2"/></svg>
<div class="a" style="left:261px;top:1531.2px;width:31px;height:31px;background:#9bc15b;border-radius:50%;"></div>
<div class="a" style="left:308px;top:1532.81px;font-size:30px;line-height:30px;color:#2f3338;font-weight:400;">best overall IOU (20% data)</div>
<div class="a" style="left:843px;top:1533.65px;font-size:29px;line-height:29px;color:#2f3338;font-weight:400;">0.85926</div>
<div class="a" style="left:1119.5px;top:1533.65px;font-size:29px;line-height:29px;color:#2f3338;font-weight:400;">0.94044</div>
<div class="a" style="left:1279px;top:1533.23px;font-size:29.5px;line-height:29.5px;color:#2f3338;font-weight:400;">20m 23s</div>
<div class="a" style="left:1459px;top:1532.81px;font-size:30px;line-height:30px;color:#2f3338;font-weight:400;">stacey</div>
<div class="a" style="left:1702px;top:1532.81px;font-size:30px;line-height:30px;color:#2f3338;font-weight:400;letter-spacing:0.3px;">reproducing the sweep r<span style="letter-spacing:3.5px;">...</span></div>
<div class="a" style="left:2121.5px;top:1533.23px;font-size:29.5px;line-height:29.5px;color:#2f3338;font-weight:400;">resnet34</div>
<div class="a" style="left:2305px;top:1533.65px;font-size:29px;line-height:29px;color:#2f3338;font-weight:400;">0</div>
<div class="a" style="left:2449px;top:1533.65px;font-size:29px;line-height:29px;color:#2f3338;font-weight:400;">NaN</div>
<div class="a" style="left:2662px;top:1527.2px;height:40px;width:186px;overflow:hidden;"><div style="position:relative;width:186px;height:40px;background:#f5dcf8;border-radius:6px;"><div class="a" style="left:13px;top:0;font-size:25px;line-height:40px;color:#9440bd;">seg_masks</div><svg class="a" style="right:13px;top:10px;" width="20" height="20" viewBox="0 0 20 20"><path d="M2 2 L18 18 M18 2 L2 18" stroke="#b67ccf" stroke-width="2"/></svg></div></div>
<div class="a" style="left:3055px;top:1533.65px;font-size:29px;line-height:29px;color:#2f3338;font-weight:400;">1376</div>
<div class="a" style="left:3234px;top:1533.65px;font-size:29px;line-height:29px;color:#2f3338;font-weight:400;">205</div>
<div class="a" style="left:3413px;top:1533.65px;font-size:29px;line-height:29px;color:#2f3338;font-weight:400;">0</div>
<div class="a" style="left:168px;top:1633px;width:4px;height:4px;background:#8f9296;border-radius:50%;"></div>
<svg class="a" style="left:207px;top:1622px;" width="33" height="22" viewBox="0 0 33 22" fill="none"><path d="M1.6 11 C7 -1.8 26 -1.8 31.4 11 C26 23.8 7 23.8 1.6 11 Z" stroke="#2e6fc2" stroke-width="2.3" fill="none" stroke-linejoin="round"/><circle cx="16.5" cy="11" r="6.3" fill="#2e6fc2"/></svg>
<div class="a" style="left:261px;top:1619.2px;width:31px;height:31px;background:#7048b0;border-radius:50%;"></div>
<div class="a" style="left:308px;top:1620.81px;font-size:30px;line-height:30px;color:#2f3338;font-weight:400;">major-sweep-196</div>
<div class="a" style="left:843px;top:1621.65px;font-size:29px;line-height:29px;color:#2f3338;font-weight:400;">0.85705</div>
<div class="a" style="left:1119.5px;top:1621.65px;font-size:29px;line-height:29px;color:#2f3338;font-weight:400;">0.93024</div>
<div class="a" style="left:1279px;top:1621.23px;font-size:29.5px;line-height:29.5px;color:#2f3338;font-weight:400;">10m 16s</div>
<div class="a" style="left:1459px;top:1620.81px;font-size:30px;line-height:30px;color:#2f3338;font-weight:400;">stacey</div>
<div class="a" style="left:1702px;top:1620.81px;font-size:30px;line-height:30px;color:#2f3338;font-weight:400;">best mean iou in sweep</div>
<div class="a" style="left:2121.5px;top:1621.23px;font-size:29.5px;line-height:29.5px;color:#2f3338;font-weight:400;">resnet34</div>
<div class="a" style="left:2305px;top:1621.65px;font-size:29px;line-height:29px;color:#2f3338;font-weight:400;">0</div>
<div class="a" style="left:2449px;top:1621.65px;font-size:29px;line-height:29px;color:#2f3338;font-weight:400;">0.000019835</div>
<div class="a" style="left:3055px;top:1621.65px;font-size:29px;line-height:29px;color:#2f3338;font-weight:400;">690</div>
<div class="a" style="left:3234px;top:1621.65px;font-size:29px;line-height:29px;color:#2f3338;font-weight:400;">96</div>
<div class="a" style="left:3413px;top:1621.65px;font-size:29px;line-height:29px;color:#2f3338;font-weight:400;">0</div>
<div class="a" style="left:168px;top:1721px;width:4px;height:4px;background:#8f9296;border-radius:50%;"></div>
<svg class="a" style="left:207px;top:1710px;" width="33" height="22" viewBox="0 0 33 22" fill="none"><path d="M1.6 11 C7 -1.8 26 -1.8 31.4 11 C26 23.8 7 23.8 1.6 11 Z" stroke="#2e6fc2" stroke-width="2.3" fill="none" stroke-linejoin="round"/><circle cx="16.5" cy="11" r="6.3" fill="#2e6fc2"/></svg>
<div class="a" style="left:261px;top:1707.2px;width:31px;height:31px;background:#7048b0;border-radius:50%;"></div>
<div class="a" style="left:308px;top:1708.81px;font-size:30px;line-height:30px;color:#2f3338;font-weight:400;">swept-sweep-164</div>
<div class="a" style="left:843px;top:1709.65px;font-size:29px;line-height:29px;color:#2f3338;font-weight:400;">0.85671</div>
<div class="a" style="left:1119.5px;top:1709.65px;font-size:29px;line-height:29px;color:#2f3338;font-weight:400;">0.93369</div>
<div class="a" style="left:1279px;top:1709.23px;font-size:29.5px;line-height:29.5px;color:#2f3338;font-weight:400;">10m 15s</div>
<div class="a" style="left:1459px;top:1708.81px;font-size:30px;line-height:30px;color:#2f3338;font-weight:400;">stacey</div>
<div class="a" style="left:1702px;top:1708.81px;font-size:30px;line-height:30px;color:#a2a5aa;font-weight:400;">Add notes...</div>
<div class="a" style="left:2121.5px;top:1709.23px;font-size:29.5px;line-height:29.5px;color:#2f3338;font-weight:400;">resnet34</div>
<div class="a" style="left:2305px;top:1709.65px;font-size:29px;line-height:29px;color:#2f3338;font-weight:400;">0</div>
<div class="a" style="left:2449px;top:1709.65px;font-size:29px;line-height:29px;color:#2f3338;font-weight:400;">NaN</div>
<div class="a" style="left:3055px;top:1709.65px;font-size:29px;line-height:29px;color:#2f3338;font-weight:400;">710</div>
<div class="a" style="left:3234px;top:1709.65px;font-size:29px;line-height:29px;color:#2f3338;font-weight:400;">96</div>
<div class="a" style="left:3413px;top:1709.65px;font-size:29px;line-height:29px;color:#2f3338;font-weight:400;">0</div>
<div class="a" style="left:168px;top:1809px;width:4px;height:4px;background:#8f9296;border-radius:50%;"></div>
<svg class="a" style="left:207px;top:1798px;" width="33" height="22" viewBox="0 0 33 22" fill="none"><path d="M1.6 11 C7 -1.8 26 -1.8 31.4 11 C26 23.8 7 23.8 1.6 11 Z" stroke="#2e6fc2" stroke-width="2.3" fill="none" stroke-linejoin="round"/><circle cx="16.5" cy="11" r="6.3" fill="#2e6fc2"/></svg>
<div class="a" style="left:261px;top:1795.2px;width:31px;height:31px;background:#a65544;border-radius:50%;"></div>
<div class="a" style="left:308px;top:1796.81px;font-size:30px;line-height:30px;color:#2f3338;font-weight:400;">amber-sweep-142</div>
<div class="a" style="left:843px;top:1797.65px;font-size:29px;line-height:29px;color:#2f3338;font-weight:400;">0.85668</div>
<div class="a" style="left:1119.5px;top:1797.65px;font-size:29px;line-height:29px;color:#2f3338;font-weight:400;">0.93049</div>
<div class="a" style="left:1279px;top:1797.23px;font-size:29.5px;line-height:29.5px;color:#2f3338;font-weight:400;">10m 11s</div>
<div class="a" style="left:1459px;top:1796.81px;font-size:30px;line-height:30px;color:#2f3338;font-weight:400;">stacey</div>
<div class="a" style="left:1702px;top:1796.81px;font-size:30px;line-height:30px;color:#a2a5aa;font-weight:400;">Add notes...</div>
<div class="a" style="left:2121.5px;top:1797.23px;font-size:29.5px;line-height:29.5px;color:#2f3338;font-weight:400;">resnet34</div>
<div class="a" style="left:2305px;top:1797.65px;font-size:29px;line-height:29px;color:#2f3338;font-weight:400;">0</div>
<div class="a" style="left:2449px;top:1797.65px;font-size:29px;line-height:29px;color:#2f3338;font-weight:400;">NaN</div>
<div class="a" style="left:3055px;top:1797.65px;font-size:29px;line-height:29px;color:#2f3338;font-weight:400;">691</div>
<div class="a" style="left:3234px;top:1797.65px;font-size:29px;line-height:29px;color:#2f3338;font-weight:400;">101</div>
<div class="a" style="left:3413px;top:1797.65px;font-size:29px;line-height:29px;color:#2f3338;font-weight:400;">0</div>
<div class="a" style="left:168px;top:1897px;width:4px;height:4px;background:#8f9296;border-radius:50%;"></div>
<svg class="a" style="left:207px;top:1886px;" width="33" height="22" viewBox="0 0 33 22" fill="none"><path d="M1.6 11 C7 -1.8 26 -1.8 31.4 11 C26 23.8 7 23.8 1.6 11 Z" stroke="#2e6fc2" stroke-width="2.3" fill="none" stroke-linejoin="round"/><circle cx="16.5" cy="11" r="6.3" fill="#2e6fc2"/></svg>
<div class="a" style="left:261px;top:1883.2px;width:31px;height:31px;background:#c15bc8;border-radius:50%;"></div>
<div class="a" style="left:308px;top:1884.81px;font-size:30px;line-height:30px;color:#2f3338;font-weight:400;">autumn-sweep-24</div>
<div class="a" style="left:843px;top:1885.65px;font-size:29px;line-height:29px;color:#2f3338;font-weight:400;">0.85612</div>
<div class="a" style="left:1119.5px;top:1885.65px;font-size:29px;line-height:29px;color:#2f3338;font-weight:400;">0.9481</div>
<div class="a" style="left:1279px;top:1885.23px;font-size:29.5px;line-height:29.5px;color:#2f3338;font-weight:400;">10m 7s</div>
<div class="a" style="left:1459px;top:1884.81px;font-size:30px;line-height:30px;color:#2f3338;font-weight:400;">stacey</div>
<div class="a" style="left:1702px;top:1884.81px;font-size:30px;line-height:30px;color:#a2a5aa;font-weight:400;">Add notes...</div>
<div class="a" style="left:2121.5px;top:1885.23px;font-size:29.5px;line-height:29.5px;color:#2f3338;font-weight:400;">resnet34</div>
<div class="a" style="left:2305px;top:1885.65px;font-size:29px;line-height:29px;color:#2f3338;font-weight:400;">0</div>
<div class="a" style="left:2449px;top:1885.65px;font-size:29px;line-height:29px;color:#2f3338;font-weight:400;">NaN</div>
<div class="a" style="left:3055px;top:1885.65px;font-size:29px;line-height:29px;color:#2f3338;font-weight:400;">698</div>
<div class="a" style="left:3234px;top:1885.65px;font-size:29px;line-height:29px;color:#2f3338;font-weight:400;">99</div>
<div class="a" style="left:3413px;top:1885.65px;font-size:29px;line-height:29px;color:#2f3338;font-weight:400;">0</div>
<div class="a" style="left:168px;top:1985px;width:4px;height:4px;background:#8f9296;border-radius:50%;"></div>
<svg class="a" style="left:207px;top:1974px;" width="33" height="22" viewBox="0 0 33 22" fill="none"><path d="M1.6 11 C7 -1.8 26 -1.8 31.4 11 C26 23.8 7 23.8 1.6 11 Z" stroke="#2e6fc2" stroke-width="2.3" fill="none" stroke-linejoin="round"/><circle cx="16.5" cy="11" r="6.3" fill="#2e6fc2"/></svg>
<div class="a" style="left:261px;top:1971.2px;width:31px;height:31px;background:#3b78d0;border-radius:50%;"></div>
<div class="a" style="left:308px;top:1972.81px;font-size:30px;line-height:30px;color:#2f3338;font-weight:400;">hopeful-sweep-33</div>
<div class="a" style="left:843px;top:1973.65px;font-size:29px;line-height:29px;color:#2f3338;font-weight:400;">0.85603</div>
<div class="a" style="left:1119.5px;top:1973.65px;font-size:29px;line-height:29px;color:#2f3338;font-weight:400;">0.90781</div>
<div class="a" style="left:1279px;top:1973.23px;font-size:29.5px;line-height:29.5px;color:#2f3338;font-weight:400;">10m 42s</div>
<div class="a" style="left:1459px;top:1972.81px;font-size:30px;line-height:30px;color:#2f3338;font-weight:400;">stacey</div>
<div class="a" style="left:1702px;top:1972.81px;font-size:30px;line-height:30px;color:#a2a5aa;font-weight:400;">Add notes...</div>
<div class="a" style="left:2121.5px;top:1973.23px;font-size:29.5px;line-height:29.5px;color:#2f3338;font-weight:400;">resnet34</div>
<div class="a" style="left:2305px;top:1973.65px;font-size:29px;line-height:29px;color:#2f3338;font-weight:400;">0</div>
<div class="a" style="left:2449px;top:1973.65px;font-size:29px;line-height:29px;color:#2f3338;font-weight:400;">NaN</div>
<div class="a" style="left:3055px;top:1973.65px;font-size:29px;line-height:29px;color:#2f3338;font-weight:400;">722</div>
<div class="a" style="left:3234px;top:1973.65px;font-size:29px;line-height:29px;color:#2f3338;font-weight:400;">85</div>
<div class="a" style="left:3413px;top:1973.65px;font-size:29px;line-height:29px;color:#2f3338;font-weight:400;">0</div>
<div class="a" style="left:168px;top:2073px;width:4px;height:4px;background:#8f9296;border-radius:50%;"></div>
<svg class="a" style="left:207px;top:2062px;" width="33" height="22" viewBox="0 0 33 22" fill="none"><path d="M1.6 11 C7 -1.8 26 -1.8 31.4 11 C26 23.8 7 23.8 1.6 11 Z" stroke="#2e6fc2" stroke-width="2.3" fill="none" stroke-linejoin="round"/><circle cx="16.5" cy="11" r="6.3" fill="#2e6fc2"/></svg>
<div class="a" style="left:261px;top:2059.2px;width:31px;height:31px;background:#9a2359;border-radius:50%;"></div>
<div class="a" style="left:308px;top:2060.80px;font-size:30px;line-height:30px;color:#2f3338;font-weight:400;">unique-sweep-191</div>
<div class="a" style="left:843px;top:2061.65px;font-size:29px;line-height:29px;color:#2f3338;font-weight:400;">0.85588</div>
<div class="a" style="left:1119.5px;top:2061.65px;font-size:29px;line-height:29px;color:#2f3338;font-weight:400;">0.92223</div>
<div class="a" style="left:1279px;top:2061.23px;font-size:29.5px;line-height:29.5px;color:#2f3338;font-weight:400;">10m 29s</div>
<div class="a" style="left:1459px;top:2060.80px;font-size:30px;line-height:30px;color:#2f3338;font-weight:400;">stacey</div>
<div class="a" style="left:1702px;top:2060.80px;font-size:30px;line-height:30px;color:#a2a5aa;font-weight:400;">Add notes...</div>
<div class="a" style="left:2121.5px;top:2061.23px;font-size:29.5px;line-height:29.5px;color:#2f3338;font-weight:400;">resnet34</div>
<div class="a" style="left:2305px;top:2061.65px;font-size:29px;line-height:29px;color:#2f3338;font-weight:400;">0</div>
<div class="a" style="left:2449px;top:2061.65px;font-size:29px;line-height:29px;color:#2f3338;font-weight:400;">NaN</div>
<div class="a" style="left:3055px;top:2061.65px;font-size:29px;line-height:29px;color:#2f3338;font-weight:400;">701</div>
<div class="a" style="left:3234px;top:2061.65px;font-size:29px;line-height:29px;color:#2f3338;font-weight:400;">107</div>
<div class="a" style="left:3413px;top:2061.65px;font-size:29px;line-height:29px;color:#2f3338;font-weight:400;">0</div>
<div class="a" style="left:168px;top:2161px;width:4px;height:4px;background:#8f9296;border-radius:50%;"></div>
<svg class="a" style="left:207px;top:2150px;" width="33" height="22" viewBox="0 0 33 22" fill="none"><path d="M1.6 11 C7 -1.8 26 -1.8 31.4 11 C26 23.8 7 23.8 1.6 11 Z" stroke="#2e6fc2" stroke-width="2.3" fill="none" stroke-linejoin="round"/><circle cx="16.5" cy="11" r="6.3" fill="#2e6fc2"/></svg>
<div class="a" style="left:261px;top:2147.2px;width:31px;height:31px;background:#c8693a;border-radius:50%;"></div>
<div class="a" style="left:308px;top:2148.80px;font-size:30px;line-height:30px;color:#2f3338;font-weight:400;">azure-sweep-22</div>
<div class="a" style="left:843px;top:2149.65px;font-size:29px;line-height:29px;color:#2f3338;font-weight:400;">0.85584</div>
<div class="a" style="left:1119.5px;top:2149.65px;font-size:29px;line-height:29px;color:#2f3338;font-weight:400;">0.92438</div>
<div class="a" style="left:1279px;top:2149.23px;font-size:29.5px;line-height:29.5px;color:#2f3338;font-weight:400;">10m 28s</div>
<div class="a" style="left:1459px;top:2148.80px;font-size:30px;line-height:30px;color:#2f3338;font-weight:400;">stacey</div>
<div class="a" style="left:1702px;top:2148.80px;font-size:30px;line-height:30px;color:#a2a5aa;font-weight:400;">Add notes...</div>
<div class="a" style="left:2121.5px;top:2149.23px;font-size:29.5px;line-height:29.5px;color:#2f3338;font-weight:400;">resnet34</div>
<div class="a" style="left:2305px;top:2149.65px;font-size:29px;line-height:29px;color:#2f3338;font-weight:400;">0</div>
<div class="a" style="left:2449px;top:2149.65px;font-size:29px;line-height:29px;color:#2f3338;font-weight:400;">NaN</div>
<div class="a" style="left:3055px;top:2149.65px;font-size:29px;line-height:29px;color:#2f3338;font-weight:400;">701</div>
<div class="a" style="left:3234px;top:2149.65px;font-size:29px;line-height:29px;color:#2f3338;font-weight:400;">100</div>
<div class="a" style="left:3413px;top:2149.65px;font-size:29px;line-height:29px;color:#2f3338;font-weight:400;">0</div>
<div class="a" style="left:3069px;top:2159px;width:360px;height:90px;background:#fdfdfd;border-top-left-radius:8px;box-shadow:0 0 8px rgba(0,0,0,0.10);"></div>
<div class="a" style="left:3108px;top:2188.70px;font-size:28px;line-height:28px;color:#2b3038;font-weight:400;">1-50</div>
<svg class="a" style="left:3171px;top:2198px;" width="18" height="10" viewBox="0 0 18 10" fill="none"><path d="M0.5 0.5 H17 L8.75 9.5 Z" fill="#1f2329"/></svg>
<div class="a" style="left:3215px;top:2188.70px;font-size:28px;line-height:28px;color:#2b3038;font-weight:400;">of 398</div>
<svg class="a" style="left:3328px;top:2189px;" width="18" height="28" viewBox="0 0 18 28" fill="none"><path d="M14 3 L4 14 L14 25" stroke="#5d6064" stroke-width="2.4" fill="none"/></svg>
<svg class="a" style="left:3379px;top:2189px;" width="18" height="28" viewBox="0 0 18 28" fill="none"><path d="M4 3 L14 14 L4 25" stroke="#5d6064" stroke-width="2.4" fill="none"/></svg>
<div class="a" style="left:40px;top:2152px;width:224px;height:42px;background:rgba(85,85,85,0.88);border-radius:21px;"></div>
<svg class="a" style="left:56px;top:2158px;" width="34" height="30" viewBox="0 0 34 30" fill="none"><path d="M5 1.8 L16.9 10.2 L27.6 1.8 L31.6 14.2 L17.2 27.4 L2.4 14.2 Z" stroke="#fff" stroke-width="2.4" stroke-linejoin="round"/><path d="M8.5 10.2 H25.5 L17.2 21 Z M2.4 14.2 L17.2 21 L31.6 14.2 M5 1.8 L12.5 15.5 M27.6 1.8 L21.8 15.5" stroke="#fff" stroke-width="1.4" stroke-linejoin="round"/></svg>
<div class="a" style="left:98.5px;top:2166.15px;font-size:14px;line-height:14px;color:#ffffff;font-weight:700;letter-spacing:1.35px;">MADE WITH GIFOX</div>
</body></html>
